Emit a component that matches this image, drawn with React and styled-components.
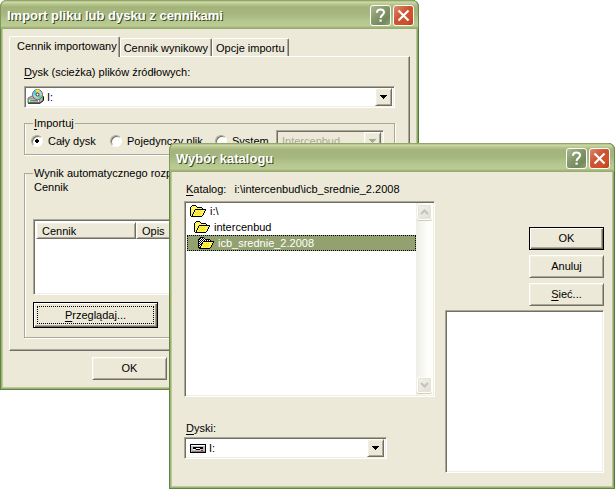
import React, { useState } from "react";
import styled, { createGlobalStyle, css } from "styled-components";

const face = "#ece9d8";
const shade = "#aca899";
const dark = "#716f64";

const GlobalStyle = createGlobalStyle`
  *, *::before, *::after { box-sizing: border-box; }
  body {
    margin: 0;
    background: #fff;
    color: #000;
    font: 11px/14px "Liberation Sans", Arial, sans-serif;
  }
  button, select, input { font: inherit; color: inherit; margin: 0; }
  u { text-underline-offset: 2px; }
`;

const raised = css`
  border: 1px solid;
  border-color: #fff ${dark} ${dark} #fff;
  box-shadow: inset 1px 1px #f1efe2, inset -1px -1px ${shade};
`;

const sunken = css`
  border: 1px solid;
  border-color: ${shade} #fff #fff ${shade};
  box-shadow: inset 1px 1px ${dark}, inset -1px -1px #f1efe2;
`;

const Desktop = styled.main`
  position: relative;
  min-height: 100vh;
`;

const Dialog = styled.section`
  padding: 0 3px 3px;
  background: ${face};
  border-radius: 7px 7px 0 0;
  box-shadow: inset 1px -1px #64834c, inset -1px 0 #56754a, inset 2px -2px #9bb273,
    inset -2px 0 #8ba665, inset 3px -3px #bccb92, inset -3px 0 #b4c88a;
`;

const ImportDialog = styled(Dialog)`
  width: 68%;
`;

const FolderDialog = styled(Dialog)`
  position: absolute;
  top: 143px;
  left: 169px;
  right: 1px;
`;

const TitleBar = styled.header`
  display: flex;
  align-items: center;
  gap: 2px;
  height: 29px;
  margin: 0 -3px;
  padding: 2px 5px 0 7px;
  border-radius: 7px 7px 0 0;
  background: linear-gradient(
    #7d9558 0, #a4b77c 1px, #d0dba8 2px, #b9c78f 4px, #a3b47b 7px,
    #a5b77f 14px, #b6c68f 21px, #bdcc95 26px, #a6b97e 27px, #93a86c 29px
  );
  box-shadow: inset 1px 0 #7f9a5c, inset -1px 0 #6a8752;
`;

const Title = styled.h1`
  flex: 1;
  margin: 0;
  color: #fff;
  font: bold 13px/18px "Liberation Sans", Arial, sans-serif;
  text-shadow: 1px 1px #3c4a1e;
  white-space: nowrap;
`;

const CaptionButton = styled.button`
  display: flex;
  width: 21px;
  height: 21px;
  padding: 0;
  align-items: center;
  justify-content: center;
  border: 1px solid #fff;
  border-radius: 3px;
  background: ${(p) =>
    p.$close
      ? "linear-gradient(135deg, #dd8a6c, #cd5230 45%, #d0512c 75%, #b93e1c)"
      : "linear-gradient(135deg, #a9b78c, #83976a 45%, #74895b 75%, #8ea471)"};
`;

const ImportBody = styled.div`
  padding: 7px 6px 7px;
`;

const TabList = styled.div`
  display: flex;
  align-items: flex-end;
  height: 20px;
`;

const Tab = styled.button`
  position: relative;
  height: ${(p) => (p.$active ? "21px" : "18px")};
  margin-bottom: ${(p) => (p.$active ? "-1px" : "0")};
  padding: ${(p) => (p.$active ? "0 2px 2px 7px" : "0 3px")};
  border: 1px solid;
  border-color: #fff ${dark} transparent #fff;
  border-bottom-width: 0;
  border-radius: 2px 2px 0 0;
  background: ${face};
  box-shadow: inset -1px 0 ${shade};
  white-space: nowrap;
`;

const TabPanel = styled.div`
  padding: 8px 14px 12px;
  border: 1px solid;
  border-color: #fff ${dark} ${dark} #fff;
  box-shadow: inset -1px -1px ${shade};
`;

const Label = styled.label`
  display: block;
`;

const ComboFrame = styled.div`
  display: flex;
  align-items: center;
  height: 22px;
  padding: 2px;
  background: ${(p) => (p.$disabled ? face : "#fff")};
  ${sunken}
  svg { flex: none; }
`;

const ComboSelect = styled.select`
  flex: 1;
  min-width: 0;
  padding: 0 3px;
  border: 0;
  outline: 0;
  appearance: none;
  background: transparent;
  &:disabled { color: ${shade}; opacity: 1; }
`;

const ComboArrow = styled.span`
  display: flex;
  width: 17px;
  height: 18px;
  align-items: center;
  justify-content: center;
  background: ${face};
  color: ${(p) => (p.$disabled ? shade : "#000")};
  ${raised}
`;

const SourceCombo = styled(ComboFrame)`
  margin: 7px 0 8px;
`;

const DriveCombo = styled(ComboFrame)`
  padding-left: 5px;
`;

const Group = styled.fieldset`
  min-width: 0;
  margin: 0;
  padding: 0 8px;
  border: 1px solid ${shade};
  box-shadow: 1px 1px #fff, inset 1px 0 #fff, inset 0 -1px ${face};
`;

const Legend = styled.legend`
  padding: 0 1px;
  background: ${face};
  white-space: nowrap;
`;

const RadioRow = styled.div`
  display: grid;
  grid-template-columns: 79px 105px 61px 1fr;
  align-items: center;
  height: 24px;
  padding: 0 2px 4px 0;
  margin-left: -2px;
`;

const RadioLabel = styled.label`
  display: flex;
  align-items: center;
  gap: 5px;
  white-space: nowrap;
`;

const Radio = styled.input`
  width: 12px;
  height: 12px;
  appearance: none;
  border: 1px solid;
  border-color: ${shade} #fff #fff ${shade};
  border-radius: 50%;
  background: #fff;
  box-shadow: inset 1px 1px ${dark};
  &:checked { background: radial-gradient(circle, #000 0 2px, #fff 2px); }
`;

const ResultGroup = styled(Group)`
  margin-top: 11px;
  padding-bottom: 9px;
`;

const ResultCaption = styled.p`
  margin: 0 0 25px 1px;
`;

const PriceListFrame = styled.div`
  height: 76px;
  padding: 2px;
  background: #fff;
  ${sunken}
`;

const PriceTable = styled.table`
  width: 100%;
  border-collapse: separate;
  border-spacing: 0;
  table-layout: fixed;
`;

const HeadCell = styled.th`
  width: ${(p) => p.$width || "auto"};
  height: 17px;
  padding: 0 5px;
  background: ${face};
  font-weight: normal;
  text-align: left;
  ${raised}
`;

const PushButton = styled.button`
  height: 23px;
  width: 75px;
  padding: 0 0 2px;
  background: ${face};
  ${raised}
  ${(p) =>
    p.$default &&
    css`
      border-color: #000;
      box-shadow: inset 1px 1px #fff, inset -1px -1px ${dark}, inset -2px -2px ${shade};
    `}
`;

const BrowseButton = styled(PushButton)`
  display: block;
  width: 125px;
  height: 26px;
  margin-top: 7px;
  padding: 3px;
`;

const FocusText = styled.span`
  display: block;
  border: 1px dotted #000;
  line-height: 16px;
`;

const ImportFooter = styled.footer`
  margin-top: 6px;
  padding-left: 83px;
`;

const FolderBody = styled.div`
  display: grid;
  grid-template-columns: minmax(0, 251fr) minmax(0, 159fr);
  column-gap: 10px;
  padding: 10px 8px 13px 12px;
`;

const FolderColumn = styled.div`
  display: flex;
  flex-direction: column;
`;

const PathLine = styled.p`
  display: flex;
  gap: 8px;
  margin: 0 2px 5px;
  white-space: nowrap;
`;

const ListFrame = styled.div`
  display: flex;
  height: 196px;
  padding: 1px;
  background: #fff;
  ${sunken}
`;

const FolderList = styled.ul`
  flex: 1;
  margin: 0;
  padding: 0 0 0 1px;
  list-style: none;
`;

const FolderItem = styled.li`
  display: flex;
  align-items: center;
  gap: 4px;
  height: 16px;
  padding-left: ${(p) => 2 + p.$depth * 4}px;
  border: 1px dotted ${(p) => (p.$selected ? "#000" : "transparent")};
  background: ${(p) => (p.$selected ? "#93a070" : "transparent")};
  color: ${(p) => (p.$selected ? "#fff" : "#000")};
`;

const ScrollTrack = styled.div`
  display: flex;
  width: 17px;
  padding: 1px 1px 2px;
  flex-direction: column;
  justify-content: space-between;
  background: linear-gradient(90deg, #eeeee6, #fefefb 70%);
`;

const ScrollButton = styled.button`
  display: flex;
  height: 16px;
  padding: 0;
  align-items: center;
  justify-content: center;
  border: 1px solid #fff;
  border-radius: 2px;
  background: linear-gradient(135deg, #f2f1ea, #e2e0d4);
  box-shadow: inset 0 0 0 1px #e5e3d8, 0 1px #d0cdb8;
`;

const DriveField = styled.div`
  width: 81%;
  margin-top: 24px;
`;

const DriveLabel = styled(Label)`
  margin: 0 2px 2px;
`;

const ActionColumn = styled.div`
  display: flex;
  flex-direction: column;
  align-items: flex-end;
  gap: 5px;
  padding-top: 45px;
`;

const Preview = styled.div`
  align-self: stretch;
  height: 163px;
  margin-top: -1px;
  background: #fff;
  ${sunken}
`;

const ArrowIcon = () => (
  <svg width="7" height="4" viewBox="0 0 7 4" shapeRendering="crispEdges" aria-hidden="true">
    <path fill="currentColor" d="M0 0h7v1H6v1H5v1H4v1H3V3H2V2H1V1H0z" />
  </svg>
);

const ChevronIcon = ({ down }) => (
  <svg width="9" height="6" viewBox="0 0 9 6" aria-hidden="true">
    <path
      d={down ? "M1 1l3.500 3.500L8 1" : "M1 5l3.500-3.500L8 5"}
      fill="none"
      stroke="#c5c3b8"
      strokeWidth="2"
    />
  </svg>
);

const HelpIcon = () => (
  <svg width="13" height="15" viewBox="0 0 13 15" aria-hidden="true">
    <path
      d="M3 4.700C3 2.500 4.500 1.600 6.500 1.600S10 2.600 10 4.500C10 6.900 6.600 6.900 6.600 10"
      fill="none"
      stroke="#fff"
      strokeWidth="2"
    />
    <path d="M5.500 11.500h2.200v2.200H5.500z" fill="#fff" />
  </svg>
);

const CloseIcon = () => (
  <svg width="13" height="13" viewBox="0 0 13 13" aria-hidden="true">
    <path d="M1.500 1.500l10 10M11.500 1.500l-10 10" stroke="#fff" strokeWidth="2.200" />
  </svg>
);

const FolderIcon = ({ selected }) => {
  const id = selected ? "dither-dark" : "dither-light";
  return (
    <svg width="16" height="12" viewBox="0 0 16 12" shapeRendering="crispEdges" aria-hidden="true">
      <defs>
        <pattern id={id} width="2" height="2" patternUnits="userSpaceOnUse">
          <path fill={selected ? "#000" : "#fffbb0"} d="M0 0h2v2H0z" />
          <path fill={selected ? "#fff" : "#ffee20"} d="M0 0h1v1H0zM1 1h1v1H1z" />
        </pattern>
      </defs>
      <path fill={`url(#${id})`} d="M1 1h6v1h5v2H5v1H4v2H3v2H2v2H1z" />
      <path fill="#fff45c" d="M5 5h10v1h-1v2h-1v2h-1v1H3V9h1V7h1z" />
      <path
        fill="#000"
        d="M2 0h4v1H2zM1 1h1v1H1zM6 1h1v1H6zM0 2h1v9H0zM7 2h5v1H7zM12 3h1v1h-1zM5 4h11v1H5zM4 5h1v2H4zM15 5h1v1h-1zM3 7h1v2H3zM14 6h1v2h-1zM13 8h1v2h-1zM2 9h1v2H2zM12 10h1v1h-1zM1 11h11v1H1z"
      />
      {[6, 8].map((y) => (
        <path key={y} fill="#fae000" d={`M6 ${y}h1v1H6zM8 ${y}h1v1H8zM10 ${y}h1v1h-1zM5 ${y + 1}h1v1H5zM7 ${y + 1}h1v1H7zM9 ${y + 1}h1v1H9z`} />
      ))}
    </svg>
  );
};

const DiscDriveIcon = () => (
  <svg width="17" height="16" viewBox="0 0 17 16" aria-hidden="true">
    <path d="M1 9l4-2h11v4l-3 3H1z" fill="#b4b4b4" stroke="#777" strokeWidth="1" />
    <path d="M1.500 10h11v3.500h-11z" fill="#e6e6e6" stroke="#888" strokeWidth="1" />
    <path d="M1 14.200h12l3.500-2.700V7.500" fill="none" stroke="#111" strokeWidth="1" />
    <path d="M3 11h3v1.500H3z" fill="#14d814" />
    <path d="M6 11h5v1.500H6z" fill="#777" />
    <circle cx="10.500" cy="5.500" r="5" fill="#c6cbd0" stroke="#666" strokeWidth="1" />
    <path d="M10.500 5.500L8.500 1a5 5 0 0 1 4 0z" fill="#ffe02c" />
    <path d="M10.500 5.500L6 5.500a5 5 0 0 1 2.500-4.500z" fill="#35d7e5" />
    <path d="M10.500 5.500l4.500 1.500a5 5 0 0 1-3 3z" fill="#4adf83" />
    <circle cx="10.500" cy="5.500" r="1.500" fill="#fff" stroke="#333" strokeWidth="1" />
  </svg>
);

const NetDriveIcon = () => (
  <svg width="16" height="9" viewBox="0 0 16 9" shapeRendering="crispEdges" aria-hidden="true">
    <path fill="#000" d="M0 0h16v9H0z" />
    <path fill="#c0c0c0" d="M1 1h14v7H1z" />
    <path fill="#fff" d="M1 1h14v1H1z" />
    <path fill="#000" d="M3 3h10v1H3zM3 4h1v1H3zM12 4h1v1h-1zM4 4h2v1H4zM10 4h2v1h-2zM6 5h4v1H6z" />
    <path fill="#fff" d="M6 4h4v1H6zM3 5h2v1H3z" />
    <path fill="#e00000" d="M11 6h2v1h-2z" />
    <path fill="#808080" d="M2 7h13v1H2z" />
  </svg>
);

function DialogTitle({ children }) {
  return (
    <TitleBar>
      <Title>{children}</Title>
      <CaptionButton type="button" aria-label="Pomoc"><HelpIcon /></CaptionButton>
      <CaptionButton type="button" aria-label="Zamknij" $close><CloseIcon /></CaptionButton>
    </TitleBar>
  );
}

function Arrow({ disabled }) {
  return <ComboArrow $disabled={disabled} aria-hidden="true"><ArrowIcon /></ComboArrow>;
}

const tabs = ["Cennik importowany", "Cennik wynikowy", "Opcje importu"];
const folders = ["i:\\", "intercenbud", "icb_srednie_2.2008"];

function ImportWindow() {
  const [mode, setMode] = useState("disk");
  const radio = (value) => ({
    type: "radio",
    name: "mode",
    checked: mode === value,
    onChange: () => setMode(value),
  });
  return (
    <ImportDialog role="dialog" aria-label="Import pliku lub dysku z cennikami">
      <DialogTitle>Import pliku lub dysku z cennikami</DialogTitle>
      <ImportBody>
        <TabList role="tablist">
          {tabs.map((name, i) => (
            <Tab key={name} type="button" role="tab" aria-selected={i === 0} $active={i === 0}>
              {name}
            </Tab>
          ))}
        </TabList>
        <TabPanel role="tabpanel">
          <Label htmlFor="source"><u>D</u>ysk (scieżka) plików źródłowych:</Label>
          <SourceCombo>
            <DiscDriveIcon />
            <ComboSelect id="source"><option>I:</option></ComboSelect>
            <Arrow />
          </SourceCombo>
          <Group>
            <Legend><u>I</u>mportuj</Legend>
            <RadioRow>
              <RadioLabel><Radio {...radio("disk")} />Cały dysk</RadioLabel>
              <RadioLabel><Radio {...radio("file")} />Pojedynczy plik</RadioLabel>
              <RadioLabel><Radio {...radio("system")} />System</RadioLabel>
              <ComboFrame $disabled>
                <ComboSelect aria-label="System" disabled><option>Intercenbud</option></ComboSelect>
                <Arrow disabled />
              </ComboFrame>
            </RadioRow>
          </Group>
          <ResultGroup>
            <Legend>Wynik automatycznego rozpoznania</Legend>
            <ResultCaption>Cennik</ResultCaption>
            <PriceListFrame>
              <PriceTable>
                <thead>
                  <tr><HeadCell $width="100px">Cennik</HeadCell><HeadCell>Opis</HeadCell></tr>
                </thead>
              </PriceTable>
            </PriceListFrame>
            <BrowseButton type="button" $default>
              <FocusText><u>P</u>rzeglądaj...</FocusText>
            </BrowseButton>
          </ResultGroup>
        </TabPanel>
        <ImportFooter>
          <PushButton type="button">OK</PushButton>
        </ImportFooter>
      </ImportBody>
    </ImportDialog>
  );
}

function FolderWindow() {
  return (
    <FolderDialog role="dialog" aria-label="Wybór katalogu">
      <DialogTitle>Wybór katalogu</DialogTitle>
      <FolderBody>
        <FolderColumn>
          <PathLine>
            <span id="folder-label"><u>K</u>atalog:</span>
            <span>i:\intercenbud\icb_srednie_2.2008</span>
          </PathLine>
          <ListFrame>
            <FolderList role="listbox" aria-labelledby="folder-label">
              {folders.map((name, depth) => (
                <FolderItem
                  key={name}
                  role="option"
                  aria-selected={depth === 2}
                  $depth={depth}
                  $selected={depth === 2}
                >
                  <FolderIcon selected={depth === 2} />
                  {name}
                </FolderItem>
              ))}
            </FolderList>
            <ScrollTrack>
              <ScrollButton type="button" aria-label="W górę"><ChevronIcon /></ScrollButton>
              <ScrollButton type="button" aria-label="W dół"><ChevronIcon down /></ScrollButton>
            </ScrollTrack>
          </ListFrame>
          <DriveField>
            <DriveLabel htmlFor="drive"><u>D</u>yski:</DriveLabel>
            <DriveCombo>
              <NetDriveIcon />
              <ComboSelect id="drive"><option>I:</option></ComboSelect>
              <Arrow />
            </DriveCombo>
          </DriveField>
        </FolderColumn>
        <ActionColumn>
          <PushButton type="button" $default>OK</PushButton>
          <PushButton type="button">Anuluj</PushButton>
          <PushButton type="button"><u>S</u>ieć...</PushButton>
          <Preview />
        </ActionColumn>
      </FolderBody>
    </FolderDialog>
  );
}

export default function App() {
  return (
    <>
      <GlobalStyle />
      <Desktop>
        <ImportWindow />
        <FolderWindow />
      </Desktop>
    </>
  );
}
